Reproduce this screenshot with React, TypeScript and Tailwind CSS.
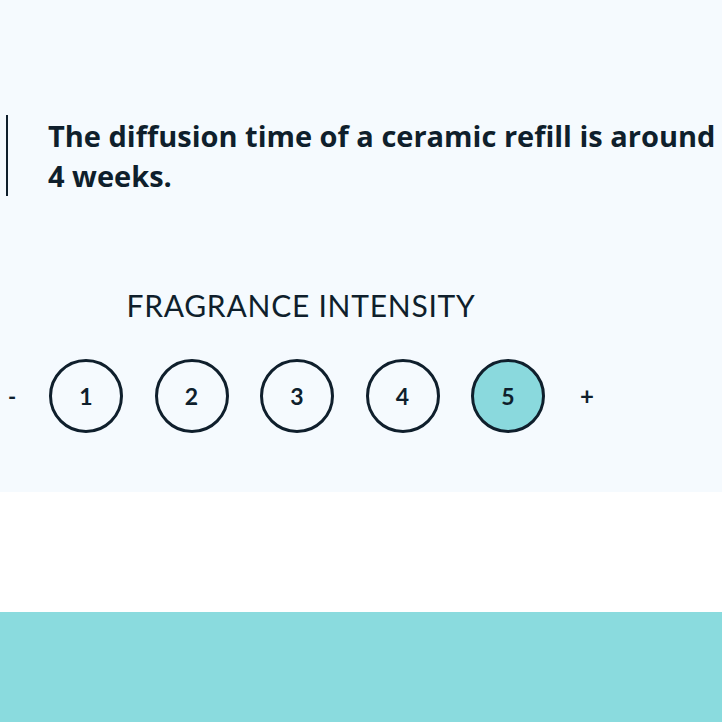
const levels = [1, 2, 3, 4, 5];

export default function App() {
  const active = 5;

  return (
    <div className="w-[722px] h-[722px] overflow-hidden bg-white text-[#0f1f2c]">
      <section className="h-[492px] bg-[#f5fafe] pt-[115px]">
        <div className="ml-[6px] border-l-2 border-[#0f1f2c] pl-[40px]">
          <p className="font-['Open_Sans',sans-serif] font-bold text-[29px] leading-[40px] whitespace-nowrap pt-[1px]">
            The diffusion time of a ceramic refill is around
            <br />
            4 weeks.
          </p>
        </div>

        <div className="w-[602px] mt-[91px] flex flex-col items-center">
          <h2 className="font-['Lato',sans-serif] text-[30px] leading-[36px] tracking-[0.75px]">
            FRAGRANCE INTENSITY
          </h2>
        </div>

        <div className="mt-[36px] flex items-center font-['Lato',sans-serif]">
          <span className="w-[24px] text-center text-[22px] font-bold">-</span>
          <div className="ml-[25px] flex items-center gap-[31.5px]">
            {levels.map((n) => (
              <button
                key={n}
                className={`w-[74px] h-[74px] rounded-full border-[3px] border-[#0f1f2c] flex items-center justify-center text-[23px] font-bold ${
                  n === active ? "bg-[#8ad9dd]" : "bg-transparent"
                }`}
              >
                {n}
              </button>
            ))}
          </div>
          <span className="ml-[35px] text-[24px] font-bold">+</span>
        </div>
      </section>
      <div className="h-[120px] bg-white" />
      <div className="h-[110px] bg-[#8adbde]" />
    </div>
  );
}
